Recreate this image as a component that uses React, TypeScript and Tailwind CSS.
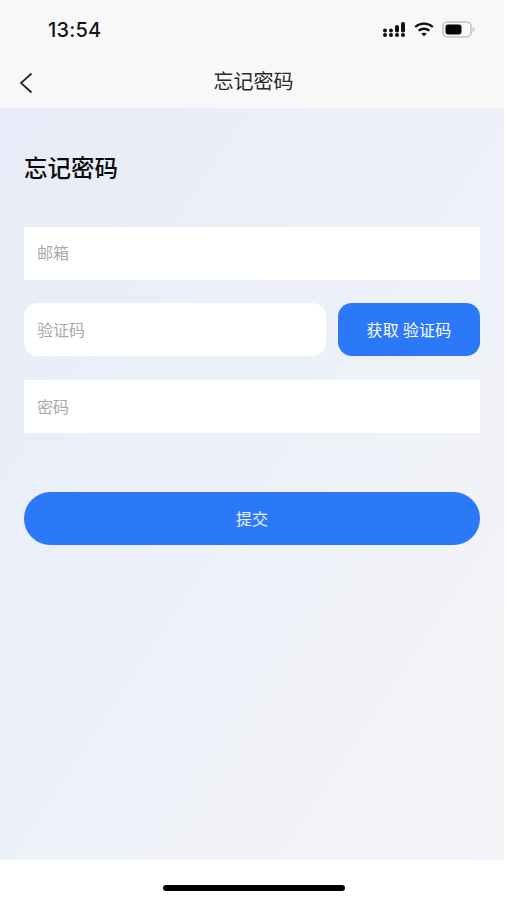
const font = "font-['Noto_Sans_CJK_SC','Noto_Sans',sans-serif]"

function SignalIcon() {
  const dots = [
    [2, 9.5], [2, 14],
    [8, 9.5], [8, 14],
    [14, 14],
    [20, 14],
  ]
  return (
    <svg width="23" height="17" viewBox="0 0 23 17" className="text-[#111]">
      {dots.map(([x, y]) => <circle key={`${x}-${y}`} cx={x} cy={y} r="2" fill="currentColor" />)}
      <rect x="12" y="4" width="4" height="7.5" rx="1.8" fill="currentColor" />
      <rect x="18" y="1" width="4" height="10.5" rx="1.8" fill="currentColor" />
    </svg>
  )
}

function WifiIcon() {
  return (
    <svg width="20" height="15" viewBox="0 0 20 15" fill="none" stroke="#111" strokeWidth="2.3">
      <path d="M1.2 5C6.2.6 13.8.6 18.8 5" />
      <path d="M4.6 8.6C7.7 6.1 12.3 6.1 15.4 8.6" />
      <path d="M10 14.4 7.3 11.5C8.9 10.4 11.1 10.4 12.7 11.5Z" fill="#111" stroke="none" />
    </svg>
  )
}

function BatteryIcon() {
  return (
    <svg width="33" height="17" viewBox="0 0 33 17" fill="none">
      <rect x="1" y="1" width="28" height="15" rx="4.5" stroke="#c4c4c4" strokeWidth="1.6" fill="#f7f7f7" />
      <rect x="3.5" y="3.5" width="16" height="10" rx="2.4" fill="#050505" />
      <path d="M30.5 6v5c1.2-.4 2-1.4 2-2.5s-.8-2.1-2-2.5Z" fill="#c4c4c4" />
    </svg>
  )
}

function Field({ label, rounded }: { label: string; rounded?: boolean }) {
  return (
    <div className={`h-[53px] bg-white flex items-center px-[13px] pb-[2px] text-[16px] text-[#a9a9a9] flex-1 ${rounded ? 'rounded-[14px]' : ''}`}>
      {label}
    </div>
  )
}

export default function App() {
  return (
    <div className={`w-[507px] h-[900px] bg-white flex flex-col overflow-hidden ${font}`}>
      {/* status bar + nav */}
      <div className="h-[108px] w-[504px] bg-[#f8f8f8] flex flex-col">
        <div className="h-[59px] flex items-center pl-[48px]">
          <span className="text-[20px] font-[550] text-[#161616] font-['Inter',sans-serif] tracking-[0.2px]">13:54</span>
          <div className="flex items-center ml-auto mr-[29px]">
            <SignalIcon />
            <div className="w-[8px]" />
            <WifiIcon />
            <div className="w-[8px]" />
            <BatteryIcon />
          </div>
        </div>
        <div className="relative flex-1 flex items-start justify-center">
          <svg width="14" height="22" viewBox="0 0 14 22" fill="none" stroke="#222" strokeWidth="1.7" className="absolute left-[19px] top-[13px]">
            <path d="M12.5 1.5 2 11l10.5 9.5" />
          </svg>
          <span className="text-[20px] leading-[24px] text-[#2a2a2a] mt-[10px] ml-[3px]">忘记密码</span>
        </div>
      </div>

      {/* form */}
      <div className="h-[752px] w-[504px] bg-gradient-to-br from-[#e7ecf8] to-[#f4f5f8] px-[24px] flex flex-col">
        <h1 className="text-[23.5px] leading-[30px] font-medium text-[#0d0d0d] mt-[44px] mb-[44.5px]">忘记密码</h1>
        <div className="flex mb-[23.5px]">
          <Field label="邮箱" />
        </div>
        <div className="flex gap-[12px] mb-[24px]">
          <Field label="验证码" rounded />
          <button className="h-[53px] w-[142px] shrink-0 rounded-[14px] bg-[#2b79f9] text-white text-[16px] pb-[2px] tracking-[0.2px]">获取 验证码</button>
        </div>
        <div className="flex">
          <Field label="密码" />
        </div>
        <button className="mt-[59px] h-[53px] rounded-full bg-[#2b79f9] text-white/90 text-[16px] pb-[2px]">提交</button>
      </div>

      {/* home indicator */}
      <div className="flex-1 flex items-start justify-center">
        <div className="mt-[24.5px] w-[182px] h-[6px] rounded-full bg-black" />
      </div>
    </div>
  )
}
